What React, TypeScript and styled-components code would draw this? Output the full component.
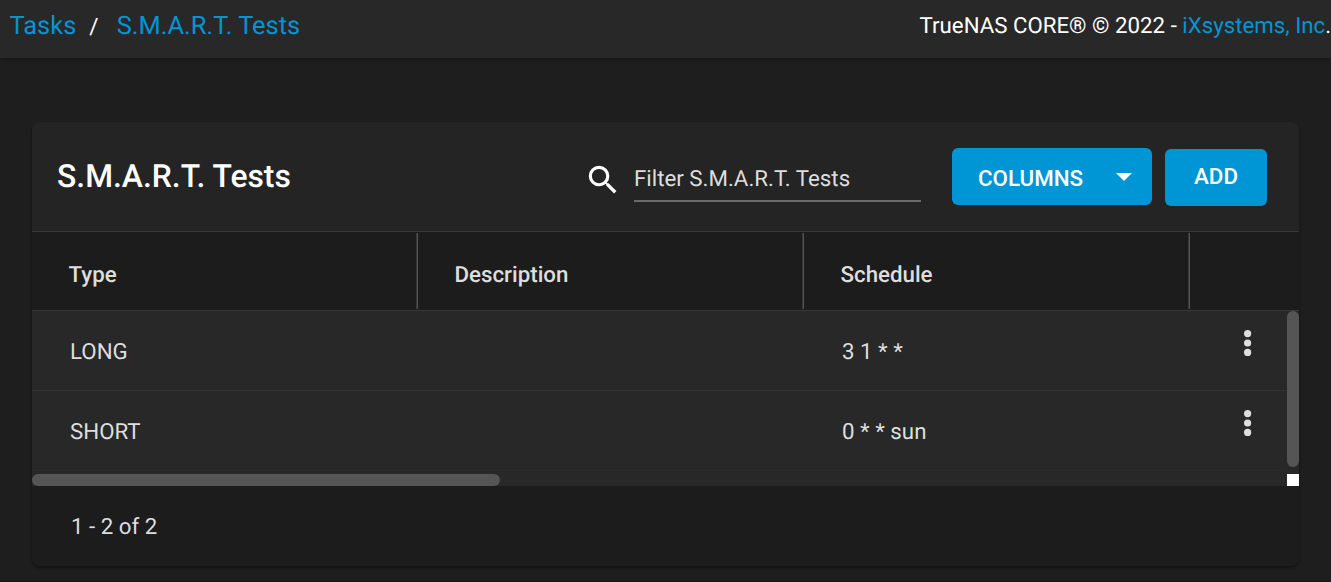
import React from 'react';
import styled, { createGlobalStyle } from 'styled-components';

const GlobalStyle = createGlobalStyle`
  *, *::before, *::after { box-sizing: border-box; }
  html, body { margin: 0; height: 100%; overflow: hidden; }
  body {
    background: #1e1e1e;
    color: #dedede;
    font-family: Roboto, "Liberation Sans", sans-serif;
    font-size: 22.3px;
    text-rendering: geometricPrecision;
  }
`;

const Page = styled.div`
  height: 582px;
  display: flex;
  flex-direction: column;
  overflow: hidden;
  border-bottom: 1px solid #181818;
`;

const TopBar = styled.header`
  flex: 0 0 58px;
  display: flex;
  justify-content: space-between;
  padding: 0 0 0 9.5px;
  background: #282828;
  box-shadow: 0 1px 4px rgba(0, 0, 0, 0.35);
  color: #fff;
  line-height: 52px;
  white-space: nowrap;
`;

const Crumbs = styled.nav`
  display: flex;
  font-size: 25.45px;
`;

const Slash = styled.span`
  width: 40.5px;
  padding-left: 13px;
  font-size: 22.4px;
  line-height: 54px;
`;

const Link = styled.a`
  color: #0095d5;
`;

const Copyright = styled.div`
  font-size: 22.25px;
`;

const Card = styled.section`
  margin: 64px 32px 0;
  height: 444px;
  display: flex;
  flex-direction: column;
  border-radius: 8px;
  overflow: hidden;
  background: #242424;
  box-shadow: 0 2px 3px rgba(0, 0, 0, 0.4);
`;

const CardHeader = styled.div`
  flex: 0 0 110px;
  display: flex;
  align-items: flex-start;
  padding: 26px 32px 0 25px;
  border-bottom: 1px solid #393939;
`;

const Title = styled.h1`
  flex: 1;
  margin: 0;
  color: #fff;
  font-size: 31.85px;
  font-weight: 500;
  line-height: 56px;
`;

const SearchIcon = styled.svg`
  width: 38px;
  height: 38px;
  margin: 12.500px 12px 0 0;
  fill: #fff;
`;

const Filter = styled.div`
  width: 287px;
  height: 54px;
  margin-right: 31px;
  border-bottom: 2px solid #6a6a6a;
  line-height: 62px;
`;

const Button = styled.button<{ $width: number; $wide?: boolean }>`
  display: flex;
  align-items: center;
  justify-content: ${(p) => (p.$wide ? 'space-between' : 'center')};
  width: ${(p) => p.$width}px;
  height: 57px;
  margin: ${(p) => (p.$wide ? '0 13px 0 0' : '1px 0 0')};
  padding: ${(p) => (p.$wide ? '3px 20.5px 0 26px' : '0 0 3px')};
  border: 0;
  border-radius: 6px;
  background: #0095d5;
  color: #fff;
  font: 500 22.35px Roboto, sans-serif;
`;

const Caret = styled.svg`
  width: 16px;
  height: 8px;
  margin-bottom: 2px;
  fill: #fff;
`;

const HeadRow = styled.div`
  flex: 0 0 79px;
  display: flex;
  padding-top: 1px;
  background: #1c1c1c;
  border-bottom: 1px solid #393939;
`;

const HeadCell = styled.div`
  flex: 0 0 386px;
  height: 76px;
  padding-left: 36.5px;
  border-right: 1px solid #555;
  box-shadow: inset -1px 0 #363636;
  font-weight: 500;
  line-height: 84px;
`;

const Viewport = styled.div`
  flex: 0 0 175px;
  display: grid;
  grid-template-columns: 1fr 12px;
  grid-template-rows: 163px 12px;
  background: #282828;
`;

const Rows = styled.div`
  display: flex;
  flex-direction: column;
`;

const Row = styled.div<{ $faint?: boolean }>`
  display: flex;
  height: 80px;
  margin-right: 1px;
  border-bottom: 1px solid ${(p) => (p.$faint ? '#2c2c2c' : '#333')};
`;

const Cell = styled.div`
  flex: 0 0 386px;
  padding-left: 38px;
  line-height: 82px;
`;

const Kebab = styled.svg`
  flex: none;
  width: 8px;
  height: 26px;
  margin: 19px 0 0 53.5px;
  fill: #dedede;
`;

const VerticalThumb = styled.div`
  height: 156px;
  border-radius: 6px;
  background: #555;
`;

const HorizontalThumb = styled.div`
  width: 468px;
  border-radius: 6px;
  background: #555;
`;

const Corner = styled.div`
  background: #fff;
`;

const Footer = styled.footer`
  flex: 1;
  padding-left: 39px;
  background: #1c1c1c;
  line-height: 82px;
`;

const tests = [
  { type: 'LONG', description: '', schedule: '3 1 * *' },
  { type: 'SHORT', description: '', schedule: '0 * * sun' },
];

export default function App() {
  return (
    <Page>
      <GlobalStyle />
      <TopBar>
        <Crumbs>
          <Link>Tasks</Link>
          <Slash>/</Slash>
          <Link>S.M.A.R.T. Tests</Link>
        </Crumbs>
        <Copyright>
          TrueNAS CORE® © 2022 - <Link>iXsystems, Inc</Link>.
        </Copyright>
      </TopBar>
      <Card>
        <CardHeader>
          <Title>S.M.A.R.T. Tests</Title>
          <SearchIcon viewBox="0 0 24 24">
            <path d="M15.5 14h-.79l-.28-.27A6.471 6.471 0 0 0 16 9.5 6.5 6.5 0 1 0 9.500 16c1.610 0 3.090-.59 4.230-1.570l.27.28v.79l5 4.990L20.490 19l-4.990-5zm-6 0C7.010 14 5 11.990 5 9.500S7.010 5 9.500 5 14 7.010 14 9.500 11.990 14 9.500 14z" />
          </SearchIcon>
          <Filter>Filter S.M.A.R.T. Tests</Filter>
          <Button $width={200} $wide>
            COLUMNS
            <Caret viewBox="0 0 16 8">
              <path d="M0 0h16L8 8z" />
            </Caret>
          </Button>
          <Button $width={102}>ADD</Button>
        </CardHeader>
        <HeadRow>
          <HeadCell>Type</HeadCell>
          <HeadCell>Description</HeadCell>
          <HeadCell>Schedule</HeadCell>
        </HeadRow>
        <Viewport>
          <Rows>
            {tests.map((t, i) => (
              <Row key={t.type} $faint={i === tests.length - 1}>
                <Cell>{t.type}</Cell>
                <Cell>{t.description}</Cell>
                <Cell>{t.schedule}</Cell>
                <Kebab viewBox="0 0 8 26">
                  <circle cx="3.600" cy="3.600" r="3.600" />
                  <circle cx="3.600" cy="13" r="3.600" />
                  <circle cx="3.600" cy="22.400" r="3.600" />
                </Kebab>
              </Row>
            ))}
          </Rows>
          <VerticalThumb />
          <HorizontalThumb />
          <Corner />
        </Viewport>
        <Footer>1 - 2 of 2</Footer>
      </Card>
    </Page>
  );
}
